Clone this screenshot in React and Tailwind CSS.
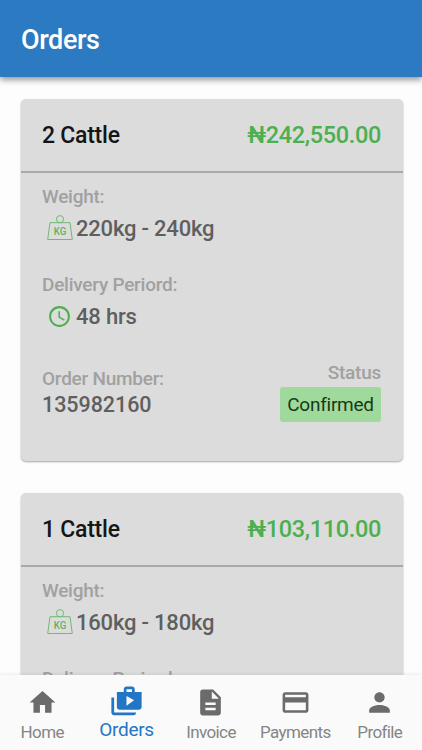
import { MdHome, MdShopTwo, MdDescription, MdPayment, MdPerson, MdAccessTime } from 'react-icons/md';

const orders = [
  { id: '135982160', title: '2 Cattle', price: '₦242,550.00', weight: '220kg - 240kg', period: '48 hrs', status: 'Confirmed' },
  { id: '135982161', title: '1 Cattle', price: '₦103,110.00', weight: '160kg - 180kg', period: '48 hrs', status: 'Confirmed' },
];

const tabs = [
  { label: 'Home', Icon: MdHome },
  { label: 'Orders', Icon: MdShopTwo, active: true },
  { label: 'Invoice', Icon: MdDescription },
  { label: 'Payments', Icon: MdPayment },
  { label: 'Profile', Icon: MdPerson },
];

const WeightIcon = () => (
  <svg viewBox="0 0 26 26" className="w-[26px] h-[26px] shrink-0" fill="none" stroke="#6fbb72" strokeWidth="1">
    <circle cx="13" cy="4.2" r="3.6" />
    <path d="M3 7.7h20l2.3 16.8H.7z" />
    <text x="13" y="19.6" textAnchor="middle" fontSize="10" fontWeight="500" textLength="12.5" lengthAdjust="spacingAndGlyphs" fill="#5db561" stroke="none">KG</text>
  </svg>
);

const Label = ({ children }) => (
  <p className="text-[19px] leading-6 font-medium tracking-[-0.25px] text-[#a1a1a1]">{children}</p>
);

const OrderCard = ({ order }) => (
  <div className="shrink-0 h-[362px] rounded-[5px] bg-[#dcdcdc] shadow-[0_1px_2px_rgba(0,0,0,0.35)]">
    <div className="flex items-center justify-between h-[74px] pl-[21px] pr-[22px] border-b-2 border-[#a9a9a9]">
      <h2 className="pt-0.5 text-[23px] font-medium tracking-[-0.25px] text-[#151515]">{order.title}</h2>
      <span className="pt-px text-[23.5px] font-medium tracking-[-0.35px] text-[#4caf50]">{order.price}</span>
    </div>
    <div className="pl-[21px] pr-[22px] pt-3">
      <Label>Weight:</Label>
      <div className="flex items-center h-[38px] pl-[5px] gap-[3px]">
        <WeightIcon />
        <span className="text-[22px] font-medium tracking-[-0.2px] text-[#5f5f5f]">{order.weight}</span>
      </div>
      <div className="mt-[26px]">
        <Label>Delivery Periord:</Label>
      </div>
      <div className="flex items-center h-[38px] pl-[5px] gap-[5px]">
        <MdAccessTime className="size-[25px] text-[#4caf50]" />
        <span className="-ml-px text-[22px] font-medium tracking-[-0.2px] text-[#5f5f5f]">{order.period}</span>
      </div>
      <div className="flex justify-between mt-[26px]">
        <div className="pt-1.5">
          <Label>Order Number:</Label>
          <p className="text-[21.5px] leading-7 font-medium tracking-[-0.05px] text-[#5f5f5f]">{order.id}</p>
        </div>
        <div className="flex flex-col items-end">
          <Label>Status</Label>
          <span className="flex items-center justify-center w-[101px] h-[35px] mt-0.5 pt-0.5 rounded-[3px] bg-[#a0d99c] text-[19px] tracking-[-0.25px] text-[#173a17]">
            {order.status}
          </span>
        </div>
      </div>
    </div>
  </div>
);

const App = () => {
  return (
    <div className="flex flex-col h-[750px] overflow-hidden bg-[#fdfdfd] font-['Roboto',sans-serif]">
      <header className="z-10 flex items-center shrink-0 h-[77px] px-[21px] pt-[3px] bg-[#2b7ac2] shadow-[0_3px_6px_rgba(0,0,0,0.4)]">
        <h1 className="text-[27px] font-medium tracking-[-0.4px] text-white">Orders</h1>
      </header>

      <main className="flex flex-col flex-1 min-h-0 gap-8 pt-[22px] pl-[21px] pr-[19px] overflow-hidden">
        {orders.map((order) => (
          <OrderCard key={order.id} order={order} />
        ))}
      </main>

      <nav className="z-10 grid grid-cols-5 shrink-0 h-[75px] bg-[#fafafa] shadow-[0_-1px_3px_rgba(0,0,0,0.08)]">
        {tabs.map(({ label, Icon, active }) => (
          <button
            key={label}
            className={active ? 'flex flex-col items-center pt-[10px] text-[#2376c4]' : 'flex flex-col items-center pt-3 text-[#6b6b6b]'}
          >
            <Icon className={active ? 'size-[33px]' : 'size-[31px]'} />
            <span
              className={active ? 'text-[19px] leading-6 tracking-[-0.3px]' : 'mt-0.5 text-[17px] leading-6 tracking-[-0.6px] text-[#858585]'}
            >
              {label}
            </span>
          </button>
        ))}
      </nav>
    </div>
  );
};

export default App;
